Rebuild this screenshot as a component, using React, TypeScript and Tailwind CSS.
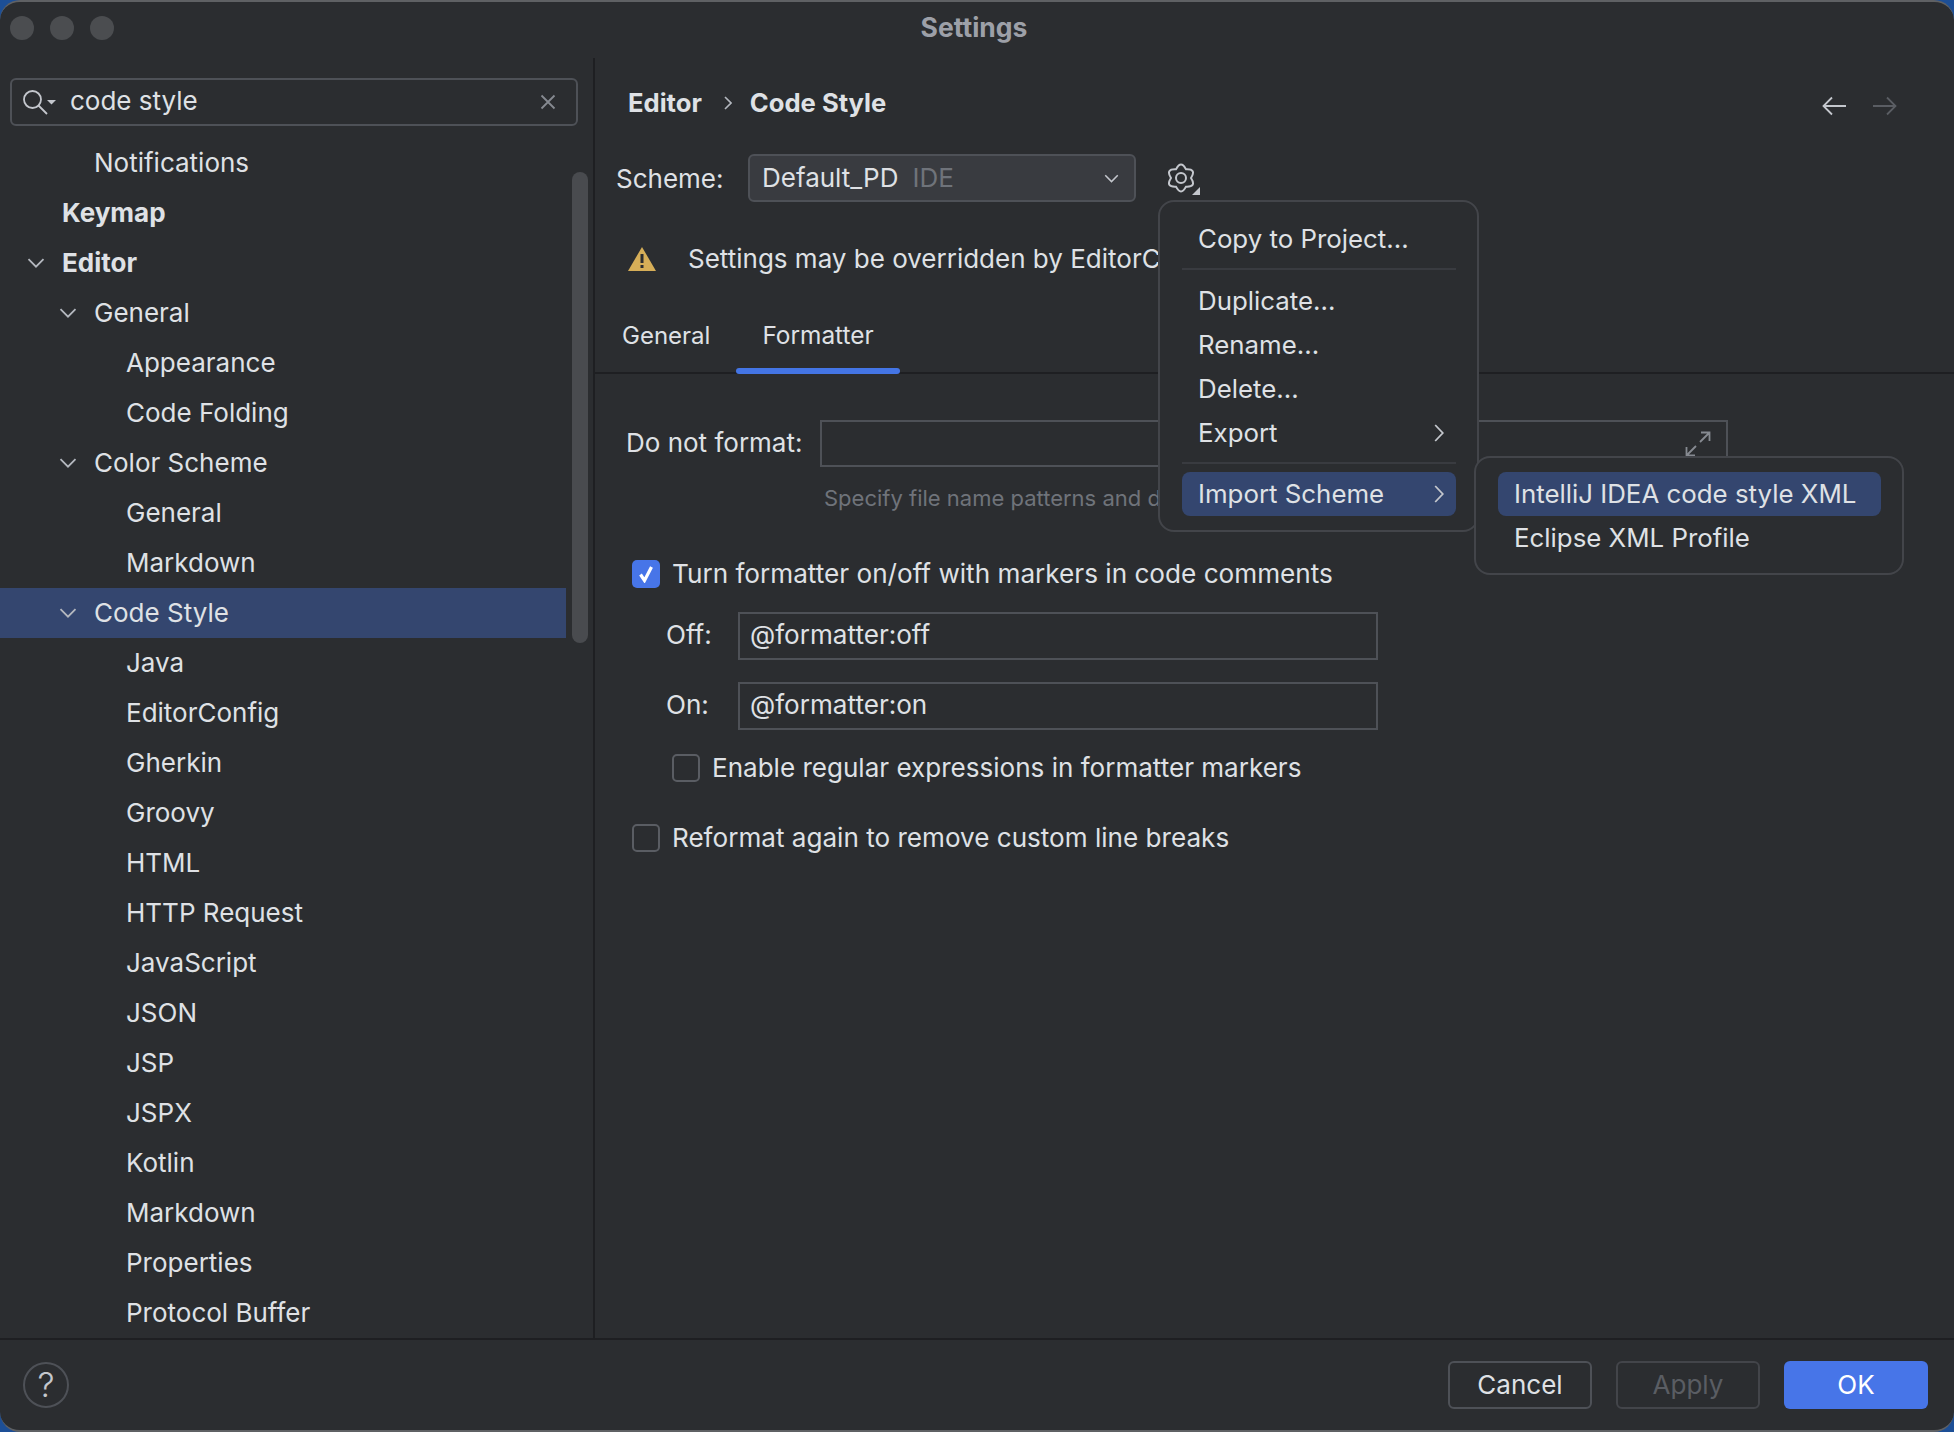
import React from "react";

type Row = { label: string; level: 0 | 1 | 2; bold?: boolean; open?: boolean; selected?: boolean };

const rows: Row[] = [
  { label: "Notifications", level: 1 },
  { label: "Keymap", level: 0, bold: true },
  { label: "Editor", level: 0, bold: true, open: true },
  { label: "General", level: 1, open: true },
  { label: "Appearance", level: 2 },
  { label: "Code Folding", level: 2 },
  { label: "Color Scheme", level: 1, open: true },
  { label: "General", level: 2 },
  { label: "Markdown", level: 2 },
  { label: "Code Style", level: 1, open: true, selected: true },
  { label: "Java", level: 2 },
  { label: "EditorConfig", level: 2 },
  { label: "Gherkin", level: 2 },
  { label: "Groovy", level: 2 },
  { label: "HTML", level: 2 },
  { label: "HTTP Request", level: 2 },
  { label: "JavaScript", level: 2 },
  { label: "JSON", level: 2 },
  { label: "JSP", level: 2 },
  { label: "JSPX", level: 2 },
  { label: "Kotlin", level: 2 },
  { label: "Markdown", level: 2 },
  { label: "Properties", level: 2 },
  { label: "Protocol Buffer", level: 2 },
];

const levelClass = { 0: "pl-[18px]", 1: "pl-[50px]", 2: "pl-[82px]" };

function ChevronDown({ className }: { className?: string }) {
  return (
    <svg viewBox="0 0 18 10" className={className} fill="none" stroke="currentColor" strokeWidth="1.8">
      <path d="M1.5 1.2 9 8.7 16.5 1.2" />
    </svg>
  );
}

function ChevronRight() {
  return (
    <svg viewBox="0 0 10 18" className="w-[10px] h-[18px] text-[#c4c7cd]" fill="none" stroke="currentColor" strokeWidth="1.8">
      <path d="M1.2 1 8.8 9 1.2 17" />
    </svg>
  );
}

function Box({ checked }: { checked?: boolean }) {
  return checked ? (
    <div className="w-[28px] h-[28px] rounded-[5px] bg-[#4775e8] flex items-center justify-center shrink-0">
      <svg viewBox="0 0 16 18" className="w-[16px] h-[18px]" fill="none" stroke="#ffffff" strokeWidth="3.2">
        <path d="M2.5 9.5 6.5 15.5 13.5 2" />
      </svg>
    </div>
  ) : (
    <div className="w-[28px] h-[28px] rounded-[5px] border-2 border-[#5a5d63] shrink-0" />
  );
}

function MenuItem({ label, hi, arrow }: { label: string; hi?: boolean; arrow?: boolean }) {
  return (
    <div
      className={`h-[44px] flex items-center justify-between pl-[16px] pr-[12px] rounded-[8px] text-[25.85px] ${hi ? "bg-[#34466f]" : ""}`}
    >
      <span>{label}</span>
      {arrow ? <ChevronRight /> : null}
    </div>
  );
}

export default function App() {
  return (
    <div className="w-[1954px] h-[1432px] bg-[#1d4f96] font-[Inter,sans-serif] text-[26px] leading-none text-[#dfe1e5] overflow-hidden">
      <div className="relative w-full h-full rounded-[20px] border-y-2 border-[#5f6164] bg-[#2b2d30] flex flex-col overflow-hidden">
        {/* title bar */}
        <div className="h-[56px] shrink-0 grid grid-cols-[1fr_auto_1fr] items-center">
          <div className="flex gap-[16px] pl-[10px] -mt-[5px]">
            <div className="w-[24px] h-[24px] rounded-full bg-[#4b4d50]" />
            <div className="w-[24px] h-[24px] rounded-full bg-[#4b4d50]" />
            <div className="w-[24px] h-[24px] rounded-full bg-[#4b4d50]" />
          </div>
          <div className="font-bold text-[26.5px] text-[#9da0a8] mr-[6px] -mt-[6px]">Settings</div>
          <div />
        </div>

        <div className="flex h-[1280px] shrink-0">
          {/* sidebar */}
          <div className="relative w-[595px] shrink-0 pt-[20px] overflow-hidden">
            <div className="ml-[10px] w-[568px] h-[48px] rounded-[6px] border-2 border-[#4e5157] flex items-center">
              <svg viewBox="0 0 36 28" className="ml-[11px] w-[36px] h-[28px]" fill="none" stroke="#c4c7cd" strokeWidth="1.8">
                <circle cx="9.5" cy="11.5" r="8.5" />
                <path d="M15.5 17.5 24 26" />
                <path d="M24 12h9l-4.5 4.5z" fill="#c4c7cd" stroke="none" />
              </svg>
              <span className="ml-[11px] flex-1 pb-[2px]">code style</span>
              <svg viewBox="0 0 16 16" className="w-[16px] h-[16px] mr-[20px]" fill="none" stroke="#868a91" strokeWidth="1.8">
                <path d="M1.5 1.5 14.5 14.5M14.5 1.5 1.5 14.5" />
              </svg>
            </div>
            <div className="mt-[12px]">
              {rows.map((r, i) => (
                <div
                  key={i}
                  className={`h-[50px] w-[566px] flex items-center ${levelClass[r.level]} ${r.selected ? "bg-[#34466f]" : ""} ${r.bold ? "font-bold" : ""}`}
                >
                  <div className="w-[44px] shrink-0 pl-[9px]">
                    {r.open ? <ChevronDown className="w-[18px] h-[10px] text-[#b4b8bf]" /> : null}
                  </div>
                  <span>{r.label}</span>
                </div>
              ))}
            </div>
            <div className="absolute left-[572px] top-[114px] w-[16px] h-[471px] rounded-full bg-[#494b4f]" />
          </div>

          {/* main */}
          <div className="relative flex-1 border-l-2 border-[#1e1f22] flex flex-col -ml-[2px]">
            <div className="h-[90px] shrink-0 flex items-center pl-[33px] pr-[57px] font-bold text-[25.6px]">
              <span>Editor</span>
              <svg viewBox="0 0 8 14" className="w-[8px] h-[14px] ml-[22px] mr-[18px] text-[#b4b8bf]" fill="none" stroke="currentColor" strokeWidth="1.6">
                <path d="M1 1 7 7 1 13" />
              </svg>
              <span>Code Style</span>
              <div className="ml-auto flex gap-[27px] mt-[5px]">
                <svg viewBox="0 0 24 20" className="w-[24px] h-[20px]" fill="none" stroke="#c4c7cd" strokeWidth="1.8">
                  <path d="M24 10H1.5M10 1.5 1.5 10l8.5 8.5" />
                </svg>
                <svg viewBox="0 0 24 20" className="w-[24px] h-[20px]" fill="none" stroke="#5a5d63" strokeWidth="1.8">
                  <path d="M0 10h22.5M14 1.5 22.5 10 14 18.5" />
                </svg>
              </div>
            </div>

            <div className="mt-[6px] h-[48px] shrink-0 flex items-center pl-[21px]">
              <span className="w-[132px] pt-[1px]">Scheme:</span>
              <div className="w-[388px] h-[48px] rounded-[6px] border-2 border-[#4e5157] bg-[#393b40] flex items-center pl-[12px] pr-[15px]">
                <span>Default_PD</span>
                <span className="ml-[14px] text-[#6f737a]">IDE</span>
                <ChevronDown className="ml-auto w-[15px] h-[9px] text-[#c4c7cd]" />
              </div>
              <svg viewBox="0 -1 34 34" className="ml-[31px] w-[34px] h-[34px] mt-[2px]" fill="none" stroke="#c4c7cd" strokeWidth="2">
                <path d="M9 6.34Q14 -3.3 19 6.34Q29.85 5.85 24 15Q29.85 24.15 19 23.66Q14 33.3 9 23.66Q-1.85 24.15 4 15Q-1.85 5.85 9 6.34Z" />
                <circle cx="14" cy="15" r="5" />
                <path d="M33 24v8h-8z" fill="#c4c7cd" stroke="none" />
              </svg>
            </div>

            <div className="mt-[32px] h-[50px] shrink-0 flex items-center pl-[33px]">
              <svg viewBox="0 0 28 24" className="w-[28px] h-[24px]">
                <path d="M14 0 28 24H0z" fill="#d6ae58" />
                <rect x="12.5" y="7" width="3" height="9" fill="#2b2d30" />
                <rect x="12.5" y="18" width="3" height="3" fill="#2b2d30" />
              </svg>
              <span className="ml-[32px] w-[470px] overflow-hidden whitespace-nowrap py-[4px]">Settings may be overridden by EditorConfig</span>
            </div>

            <div className="mt-[16px] h-[74px] shrink-0 flex border-b-2 border-[#1e1f22] text-[24px]">
              <div className="ml-[27px] w-[114px] h-[68px] pt-[3px] flex items-center">General</div>
              <div className="w-[164px] h-[74px] flex flex-col">
                <div className="h-[68px] pt-[3px] flex items-center justify-center text-[24.4px]">Formatter</div>
                <div className="h-[6px] rounded-full bg-[#4475e5]" />
              </div>
            </div>

            <div className="mt-[46px] ml-[31px] h-[47px] flex items-center">
              <span className="w-[194px] pb-[2px]">Do not format:</span>
              <div className="relative w-[908px] h-[47px] border-2 border-[#4e5157] flex items-center justify-end pr-[15px]">
                <svg viewBox="0 0 26 26" className="w-[26px] h-[26px]" fill="none" stroke="#868a91" strokeWidth="1.8">
                  <path d="M15 11 24.5 1.5M16 1.5h8.5V10M11 15 1.5 24.5M10 24.5H1.5V16" />
                </svg>
              </div>
            </div>
            <div className="mt-[15px] ml-[229px] w-[334px] overflow-hidden h-[32px] flex items-center text-[#6f737a] text-[22px] whitespace-nowrap">
              Specify file name patterns and directories to exclude
            </div>

            <div className="mt-[46px] ml-[37px] h-[28px] flex items-center gap-[12px] text-[26.15px]">
              <Box checked />
              <span>Turn formatter on/off with markers in code comments</span>
            </div>
            <div className="mt-[24px] ml-[71px] h-[48px] flex items-center text-[26.1px]">
              <span className="w-[72px] pb-[1px]">Off:</span>
              <div className="w-[640px] h-[48px] border-2 border-[#4e5157] flex items-center pl-[10px] pb-[2px]">@formatter:off</div>
            </div>
            <div className="mt-[22px] ml-[71px] h-[48px] flex items-center text-[26.1px]">
              <span className="w-[72px] pb-[1px]">On:</span>
              <div className="w-[640px] h-[48px] border-2 border-[#4e5157] flex items-center pl-[10px] pb-[2px]">@formatter:on</div>
            </div>
            <div className="mt-[24px] ml-[77px] h-[28px] flex items-center gap-[12px] text-[26.05px]">
              <Box />
              <span>Enable regular expressions in formatter markers</span>
            </div>
            <div className="mt-[42px] ml-[37px] h-[28px] flex items-center gap-[12px] text-[26.1px]">
              <Box />
              <span>Reformat again to remove custom line breaks</span>
            </div>
          </div>
        </div>

        {/* footer */}
        <div className="flex-1 border-t-2 border-[#1e1f22] flex items-center pl-[23px] pr-[26px]">
          <div className="w-[46px] h-[46px] rounded-full border-2 border-[#4e5157] flex items-center justify-center text-[#c4c7cd] font-light text-[34px]">?</div>
          <div className="ml-auto flex gap-[24px]">
            <div className="w-[144px] h-[48px] rounded-[6px] border-2 border-[#4e5157] flex items-center justify-center">Cancel</div>
            <div className="w-[144px] h-[48px] rounded-[6px] border-2 border-[#43454a] flex items-center justify-center text-[#5a5d63]">Apply</div>
            <div className="w-[144px] h-[48px] rounded-[6px] bg-[#4775e8] flex items-center justify-center text-white">OK</div>
          </div>
        </div>

        {/* scheme popup */}
        <div className="absolute left-[1158px] top-[198px] w-[321px] h-[332px] rounded-[16px] border-2 border-[#43454a] bg-[#2b2d30] pl-[22px] pr-[21px] pt-[15px]">
          <MenuItem label="Copy to Project..." />
          <div className="mt-[7px] mb-[9px] h-[2px] bg-[#393b40]" />
          <MenuItem label="Duplicate..." />
          <MenuItem label="Rename..." />
          <MenuItem label="Delete..." />
          <MenuItem label="Export" arrow />
          <div className="mt-[7px] mb-[8px] h-[2px] bg-[#393b40]" />
          <MenuItem label="Import Scheme" hi arrow />
        </div>
        <div className="absolute left-[1474px] top-[454px] w-[430px] h-[119px] rounded-[16px] border-2 border-[#43454a] bg-[#2b2d30] pl-[22px] pr-[21px] pt-[14px]">
          <MenuItem label="IntelliJ IDEA code style XML" hi />
          <MenuItem label="Eclipse XML Profile" />
        </div>
      </div>
    </div>
  );
}
